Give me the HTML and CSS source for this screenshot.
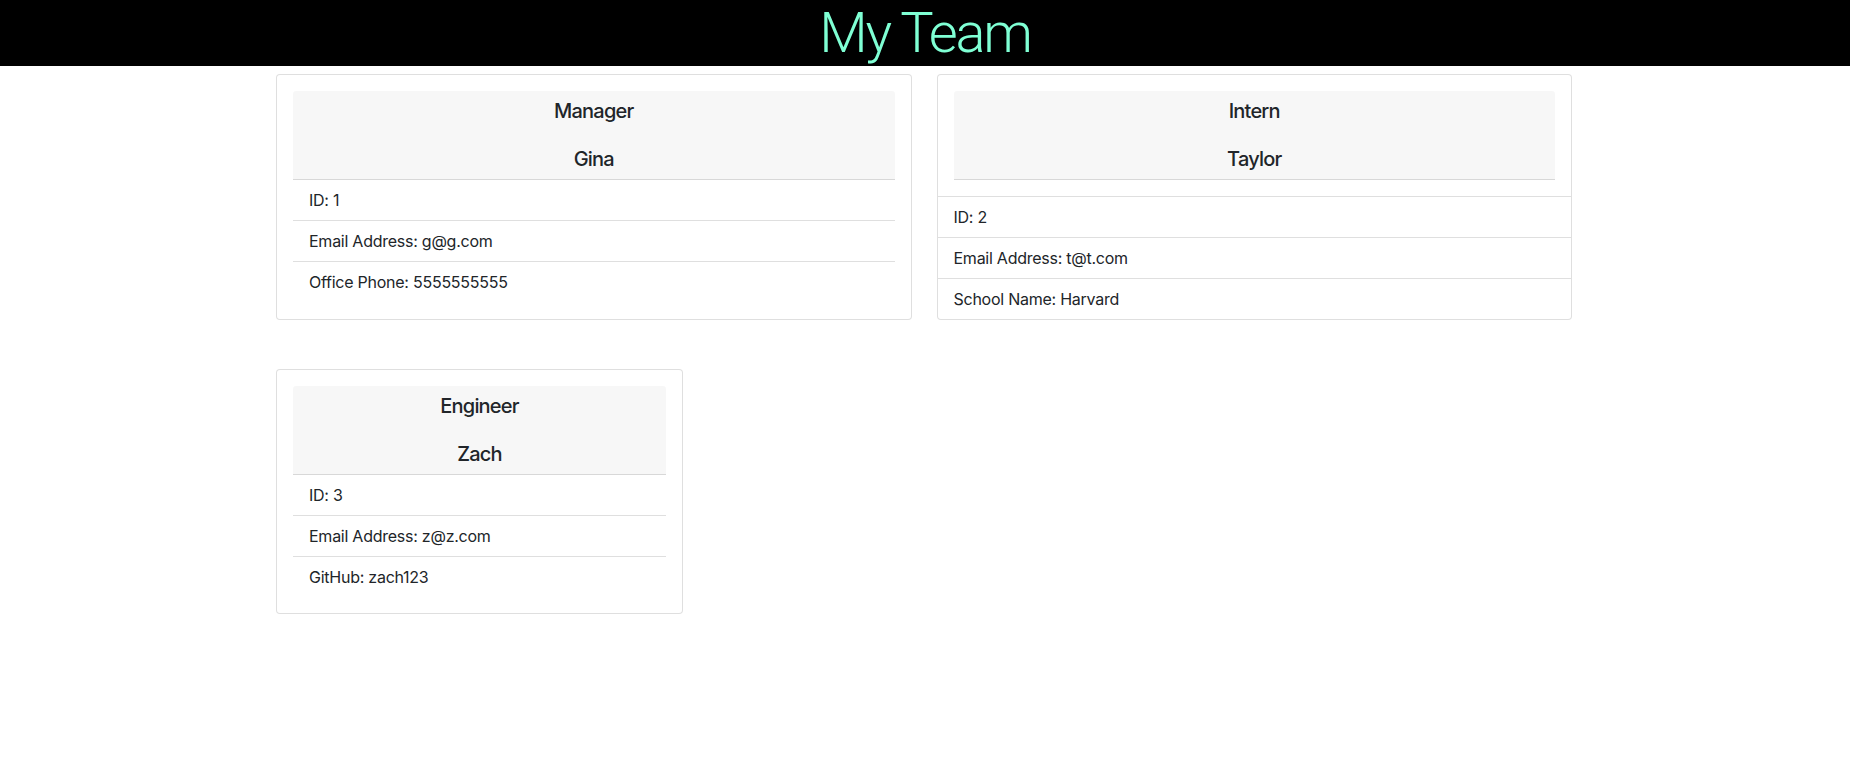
FILE: index.html
```html
<!DOCTYPE html>
<html lang="en">
<head>
<meta charset="utf-8">
<title>My Team</title>
<link rel="stylesheet" href="styles.css">
</head>
<body>
<header class="top">
  <h1 class="title">My Team</h1>
</header>
<main class="team">
  <div class="team-row">
    <section class="card card-half">
      <div class="card-body">
        <div class="card-head">
          <h5 class="role">Manager</h5>
          <h5 class="name">Gina</h5>
        </div>
        <ul class="list">
          <li class="item">ID: 1</li>
          <li class="item">Email Address: g@g.com</li>
          <li class="item">Office Phone: 5555555555</li>
        </ul>
      </div>
    </section>
    <section class="card card-half">
      <div class="card-body">
        <div class="card-head">
          <h5 class="role">Intern</h5>
          <h5 class="name">Taylor</h5>
        </div>
      </div>
      <ul class="list list-outer">
        <li class="item">ID: 2</li>
        <li class="item">Email Address: t@t.com</li>
        <li class="item">School Name: Harvard</li>
      </ul>
    </section>
  </div>
  <div class="team-row">
    <section class="card card-small">
      <div class="card-body">
        <div class="card-head">
          <h5 class="role">Engineer</h5>
          <h5 class="name">Zach</h5>
        </div>
        <ul class="list">
          <li class="item">ID: 3</li>
          <li class="item">Email Address: z@z.com</li>
          <li class="item">GitHub: zach123</li>
        </ul>
      </div>
    </section>
  </div>
</main>
</body>
</html>
```

FILE: styles.css
```css
* {
  box-sizing: border-box;
}

body {
  margin: 0;
  font-family: Inter, "Noto Sans", "Liberation Sans", sans-serif;
  font-size: 16px;
  line-height: 24px;
  letter-spacing: -0.25px;
  color: #212529;
  background: #fff;
}

.top {
  background: #000;
  height: 66px;
  text-align: center;
}

.title {
  margin: 0;
  font-family: Roboto, Inter, "Liberation Sans", sans-serif;
  font-size: 56px;
  font-weight: 300;
  line-height: 66px;
  letter-spacing: -2.2px;
  color: #7fffd4;
}

.team {
  width: 1296px;
  margin: 8px 0 0 calc(50% - 649px);
  display: flex;
  flex-direction: column;
  gap: 49px;
}

.team-row {
  display: flex;
  gap: 25px;
}

.card {
  background: #fff;
  border: 1px solid rgba(0, 0, 0, 0.125);
  border-radius: 4px;
  display: flex;
  flex-direction: column;
}

.card-half {
  flex: 1 1 0;
}

.card-small {
  width: 407px;
}

.card-body {
  padding: 16px;
}

.card-head {
  background: rgba(0, 0, 0, 0.03);
  border-bottom: 1px solid rgba(0, 0, 0, 0.125);
  border-radius: 3px 3px 0 0;
  padding: 8px 16px;
  display: flex;
  flex-direction: column;
  gap: 24px;
  text-align: center;
}

.role,
.name {
  margin: 0;
  font-size: 20px;
  font-weight: 500;
  line-height: 24px;
  letter-spacing: -0.8px;
}

.list {
  margin: 0;
  padding: 0;
  list-style: none;
}

.list-outer {
  border-top: 1px solid rgba(0, 0, 0, 0.125);
}

.item {
  padding: 8px 16px;
  border-bottom: 1px solid rgba(0, 0, 0, 0.125);
}

.item:last-child {
  border-bottom: 0;
}
```
